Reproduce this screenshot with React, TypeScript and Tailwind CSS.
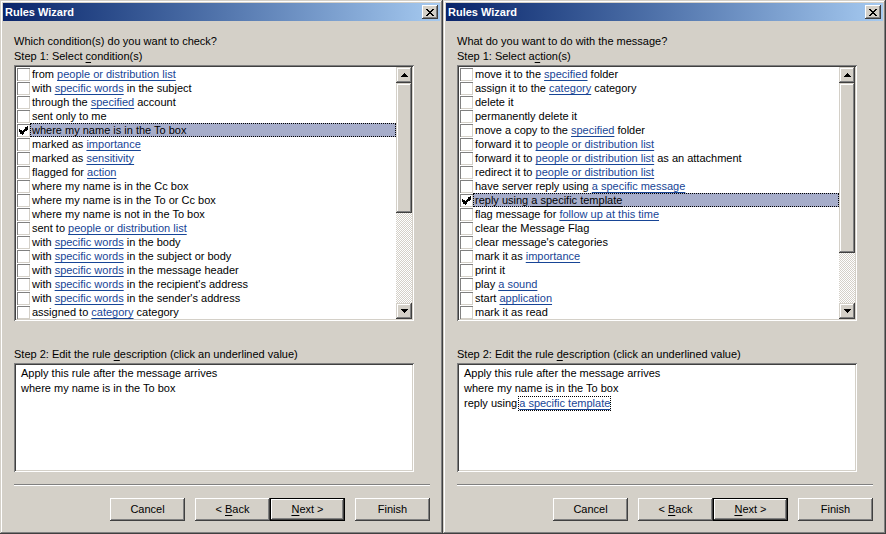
import React from "react";

type Seg = string | { l: string };
type Row = Seg[];

const leftRows: Row[] = [
  ["from ", { l: "people or distribution list" }],
  ["with ", { l: "specific words" }, " in the subject"],
  ["through the ", { l: "specified" }, " account"],
  ["sent only to me"],
  ["where my name is in the To box"],
  ["marked as ", { l: "importance" }],
  ["marked as ", { l: "sensitivity" }],
  ["flagged for ", { l: "action" }],
  ["where my name is in the Cc box"],
  ["where my name is in the To or Cc box"],
  ["where my name is not in the To box"],
  ["sent to ", { l: "people or distribution list" }],
  ["with ", { l: "specific words" }, " in the body"],
  ["with ", { l: "specific words" }, " in the subject or body"],
  ["with ", { l: "specific words" }, " in the message header"],
  ["with ", { l: "specific words" }, " in the recipient's address"],
  ["with ", { l: "specific words" }, " in the sender's address"],
  ["assigned to ", { l: "category" }, " category"],
];

const rightRows: Row[] = [
  ["move it to the ", { l: "specified" }, " folder"],
  ["assign it to the ", { l: "category" }, " category"],
  ["delete it"],
  ["permanently delete it"],
  ["move a copy to the ", { l: "specified" }, " folder"],
  ["forward it to ", { l: "people or distribution list" }],
  ["forward it to ", { l: "people or distribution list" }, " as an attachment"],
  ["redirect it to ", { l: "people or distribution list" }],
  ["have server reply using ", { l: "a specific message" }],
  ["reply using ", { l: "a specific template" }],
  ["flag message for ", { l: "follow up at this time" }],
  ["clear the Message Flag"],
  ["clear message's categories"],
  ["mark it as ", { l: "importance" }],
  ["print it"],
  ["play ", { l: "a sound" }],
  ["start ", { l: "application" }],
  ["mark it as read"],
];

const RAISED =
  "bg-[#d4d0c8] shadow-[inset_-1px_-1px_#404040,inset_1px_1px_#d4d0c8,inset_-2px_-2px_#808080,inset_2px_2px_#ffffff]";
const PUSH =
  "bg-[#d4d0c8] shadow-[inset_-1px_-1px_#404040,inset_1px_1px_#ffffff,inset_-2px_-2px_#808080,inset_2px_2px_#d4d0c8]";
const SUNKEN =
  "bg-white shadow-[inset_1px_1px_#808080,inset_-1px_-1px_#ffffff,inset_2px_2px_#404040,inset_-2px_-2px_#d4d0c8]";

function Check() {
  return (
    <svg width="9" height="9" viewBox="0 0 7 7" shapeRendering="crispEdges">
      <rect x="6" y="0" width="1" height="1" fill="#000" />
      <rect x="5" y="1" width="2" height="1" fill="#000" />
      <rect x="0" y="2" width="1" height="1" fill="#000" />
      <rect x="4" y="2" width="3" height="1" fill="#000" />
      <rect x="0" y="3" width="2" height="1" fill="#000" />
      <rect x="3" y="3" width="3" height="1" fill="#000" />
      <rect x="0" y="4" width="5" height="1" fill="#000" />
      <rect x="1" y="5" width="3" height="1" fill="#000" />
      <rect x="2" y="6" width="1" height="1" fill="#000" />
    </svg>
  );
}

function Arrow({ down }: { down?: boolean }) {
  const rows = [
    [3, 1],
    [2, 3],
    [1, 5],
    [0, 7],
  ];
  return (
    <svg width="7" height="4" viewBox="0 0 7 4" shapeRendering="crispEdges">
      {rows.map(([x, w], i) => (
        <rect key={i} x={x} y={down ? 3 - i : i} width={w} height="1" fill="#000" />
      ))}
    </svg>
  );
}

function CloseGlyph() {
  const r = [];
  for (let i = 0; i < 7; i++) {
    r.push(<rect key={"a" + i} x={i} y={i} width="2" height="1" fill="#000" />);
    r.push(<rect key={"b" + i} x={6 - i} y={i} width="2" height="1" fill="#000" />);
  }
  return (
    <svg width="8" height="7" viewBox="0 0 8 7" shapeRendering="crispEdges">
      {r}
    </svg>
  );
}

function ListRow({ row, selected }: { row: Row; selected?: boolean }) {
  return (
    <div className="flex h-[14px] items-center">
      <div className="ml-[1px] flex h-[13px] w-[13px] shrink-0 items-center justify-center bg-white shadow-[inset_1px_1px_#808080,inset_-1px_-1px_#d4d0c8]">
        {selected && <Check />}
      </div>
      <div
        className={
          selected
            ? "h-[14px] flex-1 whitespace-nowrap bg-[#a6adca] pl-[2px] leading-[14px] text-black outline-1 outline-dotted outline-offset-[-1px] outline-black"
            : "h-[14px] flex-1 whitespace-nowrap pl-[2px] leading-[14px] text-black"
        }
      >
        {row.map((s, i) =>
          typeof s === "string" ? (
            <span key={i} className="whitespace-pre">
              {s}
            </span>
          ) : (
            <span
              key={i}
              className={selected ? "text-black underline underline-offset-[2px]" : "text-[#174596] underline underline-offset-[2px]"}
            >
              {s.l}
            </span>
          )
        )}
      </div>
    </div>
  );
}

function Scrollbar({ thumbClass }: { thumbClass: string }) {
  return (
    <div className="flex w-[16px] shrink-0 flex-col">
      <div className={`flex h-[16px] items-center justify-center ${RAISED}`}>
        <Arrow />
      </div>
      <div className={`${thumbClass} ${RAISED}`} />
      <div className="flex-1 bg-[repeating-conic-gradient(#ffffff_0%_25%,#d4d0c8_0%_50%)] bg-[length:2px_2px]" />
      <div className={`flex h-[16px] items-center justify-center ${RAISED}`}>
        <Arrow down />
      </div>
    </div>
  );
}

function Btn({ children, def }: { children: React.ReactNode; def?: boolean }) {
  return (
    <div
      className={
        def
          ? `flex h-[23px] w-[75px] items-center justify-center border border-black ${PUSH}`
          : `flex h-[23px] w-[75px] items-center justify-center ${PUSH}`
      }
    >
      {children}
    </div>
  );
}

function Wizard({
  question,
  step1,
  rows,
  selectedIndex,
  thumbClass,
  desc,
}: {
  question: string;
  step1: React.ReactNode;
  rows: Row[];
  selectedIndex: number;
  thumbClass: string;
  desc: React.ReactNode;
}) {
  return (
    <div className="flex h-[534px] w-[443px] shrink-0 flex-col bg-[#d4d0c8] p-[3px] shadow-[inset_-1px_-1px_#404040,inset_1px_1px_#d4d0c8,inset_-2px_-2px_#808080,inset_2px_2px_#ffffff]">
      <div className="flex h-[18px] items-center justify-between bg-linear-to-r from-[#0a246a] to-[#a6caf0] pl-[2px] pr-[2px]">
        <span className="text-[11px] font-bold leading-[18px] text-white">Rules Wizard</span>
        <div className={`flex h-[14px] w-[16px] items-center justify-center ${PUSH}`}>
          <CloseGlyph />
        </div>
      </div>
      <div className="flex flex-col pl-[11px]">
        <div className="mt-[13px] h-[15px] leading-[15px]">{question}</div>
        <div className="h-[15px] leading-[15px]">{step1}</div>
        <div className={`mt-[1px] flex h-[256px] w-[400px] p-[2px] ${SUNKEN}`}>
          <div className="flex flex-1 flex-col overflow-hidden">
            {rows.map((r, i) => (
              <ListRow key={i} row={r} selected={i === selectedIndex} />
            ))}
          </div>
          <Scrollbar thumbClass={thumbClass} />
        </div>
        <div className="mt-[26px] h-[15px] leading-[15px]">
          Step 2: Edit the rule <span className="underline underline-offset-[2px]">d</span>escription (click an underlined value)
        </div>
        <div className={`mt-[1px] h-[109px] w-[400px] p-[2px] pl-[7px] pt-[3px] ${SUNKEN}`}>{desc}</div>
        <div className="mt-[12px] h-[2px] w-[416px] border-t border-b border-t-[#808080] border-b-white" />
        <div className="mt-[12px] flex w-[416px] justify-end">
          <Btn>Cancel</Btn>
          <div className="ml-[10px]">
            <Btn>
              &lt;&nbsp;<span className="underline underline-offset-[2px]">B</span>ack
            </Btn>
          </div>
          <Btn def>
            <span className="underline underline-offset-[2px]">N</span>ext &gt;
          </Btn>
          <div className="ml-[10px]">
            <Btn>Finish</Btn>
          </div>
        </div>
      </div>
    </div>
  );
}

export default function App() {
  return (
    <div className="flex h-[534px] w-[886px] bg-[#d4d0c8] font-['Liberation_Sans',Arial,sans-serif] text-[11px] text-black">
      <Wizard
        question="Which condition(s) do you want to check?"
        step1={
          <>
            Step 1: Select <span className="underline underline-offset-[2px]">c</span>ondition(s)
          </>
        }
        rows={leftRows}
        selectedIndex={4}
        thumbClass="h-[130px]"
        desc={
          <div className="leading-[15px]">
            <div>Apply this rule after the message arrives</div>
            <div>where my name is in the To box</div>
          </div>
        }
      />
      <Wizard
        question="What do you want to do with the message?"
        step1={
          <>
            Step 1: Select a<span className="underline underline-offset-[2px]">c</span>tion(s)
          </>
        }
        rows={rightRows}
        selectedIndex={9}
        thumbClass="h-[170px]"
        desc={
          <div className="leading-[15px]">
            <div>Apply this rule after the message arrives</div>
            <div>where my name is in the To box</div>
            <div className="flex">
              <span>reply using</span>
              <span className="ml-[1px] px-[1px] text-[#174596] underline underline-offset-[2px] outline-1 outline-dotted outline-offset-[-1px] outline-black">
                a specific template
              </span>
            </div>
          </div>
        }
      />
    </div>
  );
}
